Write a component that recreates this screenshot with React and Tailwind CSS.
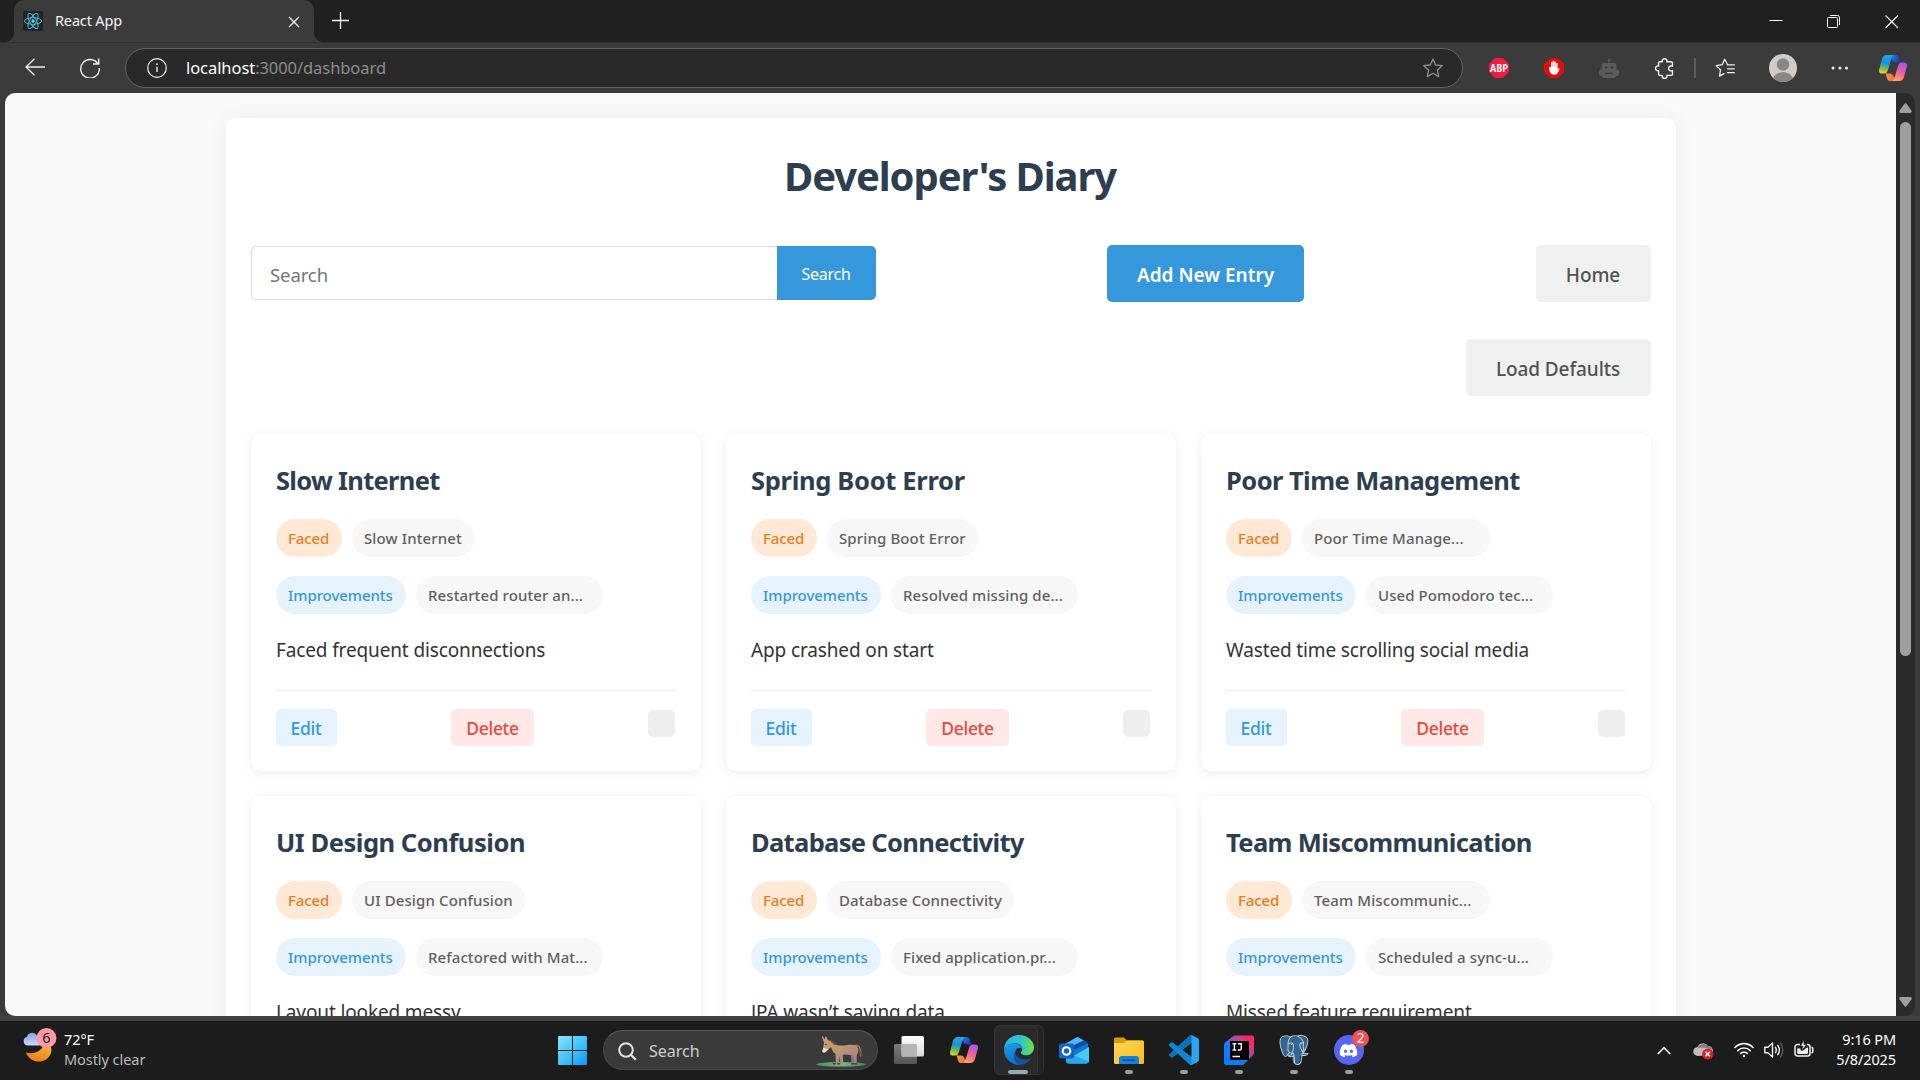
import React from 'react';
import { FaDiscord } from 'react-icons/fa';
import { SiPostgresql } from 'react-icons/si';

const ENTRIES = [
  { title: 'Slow Internet', titleTrack: 'tracking-[-0.027em]', faced: 'Slow Internet', improvement: 'Restarted router an...', text: 'Faced frequent disconnections', facedW: 'w-[122px]' },
  { title: 'Spring Boot Error', titleTrack: 'tracking-[-0.012em]', faced: 'Spring Boot Error', improvement: 'Resolved missing de...', text: 'App crashed on start', facedW: 'w-[151px]' },
  { title: 'Poor Time Management', titleTrack: 'tracking-[-0.022em]', faced: 'Poor Time Manage...', improvement: 'Used Pomodoro tec...', text: 'Wasted time scrolling social media', facedW: 'w-[188px]' },
  { title: 'UI Design Confusion', titleTrack: 'tracking-[-0.018em]', faced: 'UI Design Confusion', improvement: 'Refactored with Mat...', text: 'Layout looked messy', facedW: 'w-[173px]' },
  { title: 'Database Connectivity', titleTrack: 'tracking-[-0.026em]', faced: 'Database Connectivity', improvement: 'Fixed application.pr...', text: 'JPA wasn’t saving data', facedW: 'w-[187px]' },
  { title: 'Team Miscommunication', titleTrack: 'tracking-[-0.024em]', faced: 'Team Miscommunic...', improvement: 'Scheduled a sync-u...', text: 'Missed feature requirement', facedW: 'w-[188px]' },
];

function ReactLogo() {
  return (
    <svg viewBox="0 0 20 20" className="size-5 shrink-0">
      <rect width="20" height="20" rx="2" fill="#20232a" />
      <g fill="none" stroke="#58c4dc" strokeWidth="0.9">
        <ellipse cx="10" cy="10" rx="8.6" ry="3.3" />
        <ellipse cx="10" cy="10" rx="8.6" ry="3.3" transform="rotate(60 10 10)" />
        <ellipse cx="10" cy="10" rx="8.6" ry="3.3" transform="rotate(120 10 10)" />
      </g>
      <circle cx="10" cy="10" r="1.7" fill="#61dafb" />
    </svg>
  );
}

function Copilot({ id, className }) {
  return (
    <svg viewBox="0 0 28 26" className={className}>
      <defs>
        <linearGradient id={id + 'a'} x1="0.4" y1="0" x2="0.2" y2="1">
          <stop offset="0" stopColor="#1aa7f2" />
          <stop offset="0.4" stopColor="#1e8fd8" />
          <stop offset="0.65" stopColor="#58b56a" />
          <stop offset="1" stopColor="#f7d417" />
        </linearGradient>
        <linearGradient id={id + 'b'} x1="0.7" y1="0" x2="0.3" y2="1">
          <stop offset="0" stopColor="#a557ee" />
          <stop offset="0.5" stopColor="#ee5f9d" />
          <stop offset="1" stopColor="#ffa654" />
        </linearGradient>
        <linearGradient id={id + 'c'} x1="0" y1="0" x2="1" y2="0.4">
          <stop offset="0" stopColor="#1aa0f0" />
          <stop offset="1" stopColor="#1b3fc4" />
        </linearGradient>
        <linearGradient id={id + 'd'} x1="0" y1="0" x2="1" y2="0">
          <stop offset="0" stopColor="#f2a03c" />
          <stop offset="1" stopColor="#ea4a3c" />
        </linearGradient>
      </defs>
      <path d="M8 0h8.6c1.9 0 2.8 1 3.3 2.6L21.3 7.4h-4.5c-1.8 0-3-1.600-3.600-3.200z" fill={'url(#' + id + 'c)'} />
      <path d="M20 26h-8.6c-1.9 0-2.8-1-3.3-2.6L6.7 18.6h4.5c1.8 0 3 1.6 3.6 3.2z" fill={'url(#' + id + 'd)'} />
      <path d="M7.6 0h7.6c-1.6.4-2.3 1.8-2.8 3.4L8.9 15.2c-.6 2-1.7 3.4-3.9 3.4H3c-2.4 0-3.6-1.8-2.8-4.4L3 4C3.8 1.4 5.2 0 7.6 0z" fill={'url(#' + id + 'a)'} />
      <path d="M20.4 26h-7.6c1.6-.4 2.3-1.8 2.8-3.4l3.5-11.8c.6-2 1.7-3.4 3.9-3.4h2c2.4 0 3.6 1.8 2.8 4.4L25 22c-.8 2.6-2.2 4-4.6 4z" fill={'url(#' + id + 'b)'} />
    </svg>
  );
}

function TabStrip() {
  return (
    <div className="flex h-[42px] bg-[#202020]">
      <div className="flex w-[14px] bg-[#3b3b3b]">
        <div className="flex-1 rounded-br-[9px] bg-[#202020]" />
      </div>
      <div className="flex w-[300px] items-start rounded-t-[10px] bg-[#3b3b3b] pl-[9px] pr-[14px] pt-[11px]">
        <ReactLogo />
        <span className="ml-3 flex-1 text-[14.5px] leading-[18px] tracking-[-0.011em] text-[#f4f4f4]">React App</span>
        <svg viewBox="0 0 12 12" className="mt-[5px] size-3" stroke="#eee" strokeWidth="1.4" fill="none">
          <path d="M1 1l10 10M11 1L1 11" />
        </svg>
      </div>
      <div className="flex bg-[#3b3b3b]">
        <div className="w-[18px] rounded-bl-[9px] bg-[#202020]" />
      </div>
      <svg viewBox="0 0 18 18" className="mt-3 h-[18px] w-[18px]" stroke="#eee" strokeWidth="1.3" fill="none">
        <path d="M8.5 0v17M0 8.5h17" />
      </svg>
      <div className="ml-auto flex pr-[5px] pt-[15px]">
        <svg viewBox="0 0 14 14" className="mr-11 size-[14px]" stroke="#fff" strokeWidth="1"><path d="M.5 5.5h13" /></svg>
        <svg viewBox="0 0 14 14" className="mr-11 size-[14px]" stroke="#fff" strokeWidth="1" fill="none">
          <rect x=".5" y="2.5" width="10" height="10" rx="1" />
          <path d="M3 .5h7.500a2 2 0 0 1 2 2V10" />
        </svg>
        <svg viewBox="0 0 14 14" className="mr-4 size-[14px]" stroke="#fff" strokeWidth="1.1"><path d="M.5 .5l12.500 12.500M13 .5L.5 13" /></svg>
      </div>
    </div>
  );
}

function ExtensionIcons() {
  return (
    <div className="flex h-7 items-center">
      <svg viewBox="0 0 20 20" className="ml-[26px] size-5">
        <path d="M6 0h8l6 6v8l-6 6H6l-6-6V6z" fill="#ee1c40" />
        <text x="10" y="13.6" textAnchor="middle" fontSize="10" fontWeight="700" fill="#fff" textLength="18" lengthAdjust="spacingAndGlyphs" fontFamily="Open Sans, sans-serif">ABP</text>
      </svg>
      <svg viewBox="0 0 20 20" className="ml-[35px] size-5">
        <path d="M6 0h8l6 6v8l-6 6H6l-6-6V6z" fill="#e40d0d" />
        <path d="M5 9.500c0-1 1.500-1.100 1.700-.1L7 10V4.600c0-1 1.400-1 1.400 0V8.500h.3V3.300c0-1 1.500-1 1.500 0V8.500h.3V3.900c0-1 1.400-1 1.400 0V8.800h.3V5.400c0-1 1.400-1 1.400 0V11.500l.6-.9c.5-.8 1.500-.3 1.200.6-.9 2.500-1.800 5.500-5.300 5.500C7 16.700 5.500 14.500 5 9.500z" fill="#fff" />
      </svg>
      <svg viewBox="0 0 20 20" className="ml-[35px] size-5" fill="#5b5b5b">
        <circle cx="10" cy="2" r="1.500" /><path d="M9.500 3h1v3h-1z" />
        <rect x="2.500" y="5" width="15" height="8" rx="2.500" />
        <rect x="0" y="11.500" width="20" height="6.500" rx="2" />
        <rect x="3" y="10" width="14" height="10" rx="2" />
        <g fill="#3b3b3b"><circle cx="7" cy="9.500" r="1.300" /><circle cx="13" cy="9.500" r="1.300" /><rect x="6" y="14.500" width="8" height="1.500" rx=".7" /></g>
      </svg>
      <svg viewBox="0 0 20 21" className="ml-[36px] h-[21px] w-5" fill="none" stroke="#f0f0f0" strokeWidth="1.400" strokeLinejoin="round">
        <path d="M4.800 3.800h2.500a2.400 2.400 0 1 1 4.600 0h4.300a1.200 1.200 0 0 1 1.200 1.200v3.200c-1.500-.6-3.800 0-3.800 2.200s2.300 2.900 3.800 2.200v3.600a1.200 1.200 0 0 1-1.200 1.200h-4.300a2.400 2.400 0 1 1-4.600 0H4.800A1.200 1.200 0 0 1 3.600 16.200v-3.600a2.400 2.400 0 1 1 0-4.600V5a1.200 1.200 0 0 1 1.200-1.200z" />
      </svg>
      <div className="ml-[19px] h-5 w-[2px] bg-[#5c5c5c]" />
      <svg viewBox="0 0 20 20" className="ml-[19px] size-5" fill="none" stroke="#f0f0f0" strokeWidth="1.300" strokeLinejoin="round" strokeLinecap="round">
        <path d="M12.500 6.500L9.700 1.200 7.200 6.700l-6 .9 4.300 4.300-1 6.200 4.500-2.500M12.500 6.900h6.800M12.500 10.800h6.800M12.500 14.700h6.800" />
      </svg>
      <svg viewBox="0 0 28 28" className="ml-[34px] size-7">
        <circle cx="14" cy="14" r="14" fill="#cfccc9" />
        <circle cx="14" cy="10.500" r="6.200" fill="#8a8683" />
        <path d="M4.300 24a14 14 0 0 0 19.400 0c-1-3.600-5-5.800-9.700-5.800S5.300 20.400 4.300 24z" fill="#8a8683" />
      </svg>
      <svg viewBox="0 0 18 4" className="ml-[34px] h-1 w-[18px]" fill="#f0f0f0"><circle cx="2" cy="2" r="1.500" /><circle cx="9" cy="2" r="1.500" /><circle cx="15.500" cy="2" r="1.500" /></svg>
      <Copilot id="tb" className="ml-[30px] h-[26px] w-7" />
    </div>
  );
}

function AddressRow() {
  return (
    <div className="flex h-[51px] items-start border-t border-[#333] bg-[#3b3b3b] pt-[5px]">
      <svg viewBox="0 0 20 18" className="ml-[25px] mt-[10px] h-[18px] w-5" fill="none" stroke="#f0f0f0" strokeWidth="1.300"><path d="M20 9H1M9.500.7L1 9l8.500 8.300" /></svg>
      <svg viewBox="0 0 20 20" className="ml-[35px] mt-[10px] size-5" fill="none" stroke="#f0f0f0" strokeWidth="1.400"><path d="M18 6A9.300 9.300 0 1 0 19.300 10M18.700.5V6H13" /></svg>
      <div className="ml-[25px] flex h-10 w-[1338px] items-center rounded-full border border-[#636363] bg-[#292929]">
        <svg viewBox="0 0 20 20" className="ml-[21px] size-5" fill="none" stroke="#f0f0f0" strokeWidth="1.200"><circle cx="10" cy="10" r="9.300" /><path d="M10 8.800V14" strokeWidth="1.400" /><circle cx="10" cy="6.200" r=".9" fill="#f0f0f0" stroke="none" /></svg>
        <span className="ml-[19px] flex-1 pb-px text-[16.5px] leading-6 tracking-[-0.004em] text-[#8d8d8d]"><span className="text-white">localhost</span>:3000/dashboard</span>
        <svg viewBox="0 0 20 20" className="mr-[19px] size-5" fill="none" stroke="#8f8f8f" strokeWidth="1.300" strokeLinejoin="round"><path d="M10 1l2.700 6 6.500.7-4.800 4.400 1.300 6.500L10 15.300l-5.700 3.300 1.300-6.500L.8 7.700l6.500-.7z" /></svg>
      </div>
      <div className="mt-[6px]"><ExtensionIcons /></div>
    </div>
  );
}

function EntryCard({ entry }) {
  const pill = 'h-[38px] rounded-full pl-3 text-[15px] font-medium leading-[38px] whitespace-nowrap';
  return (
    <div className="h-[337px] rounded-[10px] bg-white p-[25px] shadow-[0_2px_12px_rgba(0,0,0,0.08)]">
      <h2 className={'mb-[18px] text-[25.5px] font-bold leading-[42px] text-[#2c3e50] whitespace-nowrap ' + entry.titleTrack}>{entry.title}</h2>
      <div className="mb-[19px] flex gap-[10px]">
        <span className={pill + ' w-[66px] bg-[#ffe8d6] text-[#e67e22] tracking-[-0.006em]'}>Faced</span>
        <span className={pill + ' bg-[#f7f7f7] tracking-[0.008em] text-[#5f5f5f] ' + entry.facedW}>{entry.faced}</span>
      </div>
      <div className="flex gap-[10px]">
        <span className={pill + ' w-[130px] bg-[#e6f3ff] text-[#3498db] tracking-[-0.004em]'}>Improvements</span>
        <span className={pill + ' w-[187px] bg-[#f7f7f7] tracking-[0.006em] text-[#5f5f5f]'}>{entry.improvement}</span>
      </div>
      <p className="mt-[21px] text-[19px] leading-[30px] tracking-[-0.007em] text-[#333] whitespace-nowrap">{entry.text}</p>
      <div className="mt-[25px] flex items-start justify-between border-t border-[#eee] pt-[18px]">
        <button className="h-[37px] w-[61px] rounded-[5px] bg-[#e6f3ff] pr-px pt-px text-[17.5px] font-medium tracking-[-0.015em] text-[#3498db]">Edit</button>
        <button className="h-[37px] w-[83px] rounded-[5px] bg-[#ffe8e6] pt-px text-[17.5px] font-medium tracking-[-0.018em] text-[#e74c3c]">Delete</button>
        <span className="mr-px mt-px size-[27px] rounded-[5px] bg-[#eee]" />
      </div>
    </div>
  );
}

function Dashboard() {
  return (
    <div className="flex h-[923px] bg-[#3b3b3b] pl-[5px] pr-[5px]">
      <main className="w-[1891px] overflow-hidden rounded-bl-[10px] rounded-tl-[10px] bg-[#f9f9f9] pt-[25px] font-['Noto_Sans','Open_Sans',sans-serif]">
        <div className="ml-[221px] h-[1400px] w-[1450px] rounded-[10px] bg-white px-[25px] pt-8 shadow-[0_0_25px_rgba(0,0,0,0.05)]">
          <h1 className="pr-[2px] text-center text-[40px] font-bold leading-[52px] tracking-[-0.027em] text-[#2c3e50]">Developer's Diary</h1>
          <div className="mt-[43px] flex items-center justify-between">
            <div className="-mt-px flex h-[54px] w-[625px]">
              <div className="flex-1 rounded-l-[5px] border border-r-0 border-[#ddd] pl-[18px] pt-[2px] text-[18.5px] leading-[51px] tracking-[-0.005em] text-[#757575]">Search</div>
              <button className="w-[99px] rounded-r-[5px] bg-[#3498db] pr-px pt-px text-[16px] tracking-[-0.017em] text-white">Search</button>
            </div>
            <button className="mr-px h-[57px] w-[197px] rounded-[5px] bg-[#3498db] pt-1 text-[19px] font-semibold text-white">Add New Entry</button>
            <button className="h-[57px] w-[115px] rounded-[5px] bg-[#f0f0f0] pt-1 pr-px text-[19px] font-medium tracking-[-0.005em] text-[#505050]">Home</button>
          </div>
          <div className="mt-[37px] flex justify-end">
            <button className="h-[57px] w-[185px] rounded-[5px] bg-[#f0f0f0] pt-1 pr-px text-[19px] font-medium tracking-[-0.005em] text-[#505050]">Load Defaults</button>
          </div>
          <div className="mt-[38px] grid grid-cols-3 gap-[25px]">
            {ENTRIES.map((e) => <EntryCard key={e.title} entry={e} />)}
          </div>
        </div>
      </main>
      <div className="flex w-[19px] flex-col items-center rounded-r-[10px] bg-[#2b2b2b] pt-[10px]">
        <svg viewBox="0 0 13 10" className="h-[10px] w-[13px]" fill="#9f9f9f"><path d="M5.300 1Q6.500-.6 7.700 1l4.800 6.700q.9 2-1.200 2.200H1.700Q-.4 9.700.5 7.700z" /></svg>
        <div className="mt-[9px] h-[534px] w-[11px] rounded-full bg-[#9f9f9f]" />
        <svg viewBox="0 0 13 10" className="mb-[9px] mt-auto h-[10px] w-[13px]" fill="#9f9f9f"><path d="M5.300 9q1.200 1.600 2.400 0l4.800-6.700Q13.400.3 11.300.1H1.700Q-.4.3.5 2.300z" /></svg>
      </div>
    </div>
  );
}

function Weather() {
  return (
    <svg viewBox="0 0 36 36" className="h-9 w-9">
      <defs>
        <linearGradient id="moon" x1="0.800" y1="0" x2="0.400" y2="1"><stop offset="0" stopColor="#f9c23c" /><stop offset="1" stopColor="#ee7b17" /></linearGradient>
        <linearGradient id="cloud" x1="0" y1="0" x2="0" y2="1"><stop offset="0" stopColor="#7fa3e0" /><stop offset="1" stopColor="#c9dcfa" /></linearGradient>
      </defs>
      <path d="M22.500 14c5 3 7.200 7.500 5.300 12.500-2 5.500-7.500 8.500-13.300 8-5.500-.5-10-4.300-11.500-9 8 2.500 17-1.500 19.500-11.500z" fill="url(#moon)" />
      <path d="M4.500 18.500A4.500 4.500 0 0 1 4 9.700 5.500 5.500 0 0 1 14 8.500 5 5 0 0 1 16 18.500z" fill="url(#cloud)" />
      <circle cx="23.500" cy="11" r="10" fill="#ff99a4" />
      <text x="23.500" y="16.200" textAnchor="middle" fontSize="14.500" fill="#222" fontFamily="Noto Sans, sans-serif">6</text>
    </svg>
  );
}

function Donkey() {
  return (
    <svg viewBox="0 0 50 32" className="h-8 w-[50px]">
      <defs>
        <linearGradient id="dk" x1="0" y1="0" x2="1" y2="1"><stop offset="0" stopColor="#cda066" /><stop offset="0.500" stopColor="#bd9570" /><stop offset="1" stopColor="#9b8190" /></linearGradient>
        <linearGradient id="grass" x1="0" y1="0" x2="1" y2="0"><stop offset="0" stopColor="#3f8f53" /><stop offset="0.500" stopColor="#7db884" /><stop offset="1" stopColor="#2f8a5a" /></linearGradient>
      </defs>
      <ellipse cx="25" cy="29.300" rx="25" ry="2.300" fill="url(#grass)" />
      <path d="M39 10q5.300 0 5.300 5.500l.2 6" stroke="#b98d5e" strokeWidth="1.200" fill="none" />
      <path d="M43.300 15.500l1.800 7 .8-6z" fill="#7a5a4a" />
      <path d="M6 0.500l2.500 4L9.800 1l1.800 4c2.500.3 5 2 7 4l3.400 1.300c6 .8 11-1.300 16.500-.3 3.700.8 4.500 4 3.500 7.500l-1.200 3-.2 8.500h-3l-.5-8.500-6.800-1-3.600.3.600 9.200h-2.800l-1-8-.5 8h-3l-.6-10.300c-2.500-1-3-3.700-4.400-6.700l-3 3-3.500 2.500c-2 .2-2.400-1.800-1.600-3.500L8 8z" fill="url(#dk)" />
      <path d="M34.800 20l2.600.5.600 9h-2.500z" fill="#8d7488" />
      <path d="M11.500 4.500c4 0 7.500 2.500 10.500 6l-4-.8c-2-2.200-4-4-6.500-5.200z" fill="#6f4d42" />
      <path d="M7.300 12.800l5 1.400-3.200 3.200c-2 .8-3.300-.8-2.600-2.500z" fill="#e6e0e0" />
      <circle cx="10" cy="9.500" r=".8" fill="#333" />
      <path d="M6.300 1.500l1.800 3.800M9.900 2.200l1 2.800" stroke="#e89a94" strokeWidth="1" />
      <path d="M16.800 28h3v1.600h-3zM21.200 28h3v1.600h-3zM35.200 28h2.800v1.600h-2.800zM38.300 28h2.800v1.600h-2.800z" fill="#4e3b4c" />
    </svg>
  );
}

function Slot({ children, dot }) {
  return (
    <div className="flex h-[59px] w-[55px] flex-col items-center pt-[14px]">
      <div className="flex h-[30px] items-center justify-center">{children}</div>
      {dot && <div className="mt-[5px] h-1 w-2 rounded-full bg-[#9d9d9d]" />}
    </div>
  );
}

function TaskbarApps() {
  return (
    <>
      <svg viewBox="0 0 29 29" className="mt-[15px] size-[29px]">
        <defs><linearGradient id="win" x1="0" y1="0" x2="29" y2="29" gradientUnits="userSpaceOnUse"><stop offset="0" stopColor="#8be2ff" /><stop offset="0.500" stopColor="#45c4fb" /><stop offset="1" stopColor="#0a95fb" /></linearGradient></defs>
        <path d="M1 0h13v14H0V1a1 1 0 0 1 1-1zM15 0h13a1 1 0 0 1 1 1v13H15zM0 15h14v14H1a1 1 0 0 1-1-1zM15 15h14v13a1 1 0 0 1-1 1H15z" fill="url(#win)" />
      </svg>
      <div className="ml-4 mt-[9px] flex h-10 w-[275px] items-center rounded-full border border-[#4a4a4a] border-t-[#5c5c5c] bg-[#3a3a3a]">
        <svg viewBox="0 0 19 19" className="ml-[14px] mt-[2px] size-[19px]" fill="none" stroke="#e2e2e2" strokeWidth="2"><circle cx="8" cy="8" r="6.800" /><path d="M12.800 12.800l5 5" strokeWidth="2.300" /></svg>
        <span className="ml-[12px] flex-1 pt-px text-[16px] leading-6 text-[#d0d0d0]">Search</span>
        <div className="mr-[11px] mt-px"><Donkey /></div>
      </div>
      <div className="ml-[3px] flex">
        <Slot>
          <svg viewBox="0 0 30 28" className="h-7 w-[30px]">
            <defs><linearGradient id="tv" x1="0" y1="0" x2="0" y2="1"><stop offset="0" stopColor="#fff" /><stop offset="1" stopColor="#d6d6d6" /></linearGradient><linearGradient id="tv2" x1="0" y1="0" x2="0" y2="1"><stop offset="0" stopColor="#7c7c7c" /><stop offset="1" stopColor="#555" /></linearGradient></defs>
            <rect x="0" y="8" width="23" height="20" rx="1.500" fill="url(#tv2)" />
            <rect x="7.500" y="0" width="22.500" height="20.500" rx="1.500" fill="url(#tv)" />
            <path d="M7.500 8H21.500a1.500 1.500 0 0 1 1.500 1.500V20.500H9a1.500 1.500 0 0 1-1.500-1.500z" fill="#b4b4b4" />
          </svg>
        </Slot>
        <Slot><Copilot id="tk" className="h-[26px] w-7" /></Slot>
        <div className="relative w-[55px]">
          <div className="absolute left-[10px] top-[4px] h-[50px] w-[43px] rounded-[6px] border border-[#333] bg-[#222]" />
          <div className="absolute left-[3px] top-[4px] h-[50px] w-11 rounded-[6px] border border-[#363636] bg-[#2a2a2a]" />
          <svg viewBox="0 0 30 30" className="absolute left-[13px] top-[14px] size-[30px]">
            <defs>
              <linearGradient id="ea" x1="0" y1="0.300" x2="1" y2="0.300"><stop offset="0" stopColor="#2bb0e4" /><stop offset="0.550" stopColor="#30c6d0" /><stop offset="1" stopColor="#6be03f" /></linearGradient>
              <linearGradient id="eb" x1="0.300" y1="0" x2="0.500" y2="1"><stop offset="0" stopColor="#1b9de2" /><stop offset="1" stopColor="#0f6fd0" /></linearGradient>
            </defs>
            <path d="M15 0c8.500 0 15 6 15 12.500 0 4.700-3.500 7.800-7.700 7.800-3.800 0-5.400-1.600-5.400-2.700 0-.9 1.400-1.400 1.400-3.700 0-3-3-5.600-7-5.600C6 8.300 2 11 0 15 0 6.500 6.700 0 15 0z" fill="url(#ea)" />
            <path d="M0 15C1.500 10 6.500 8 10.500 8.200c4.300.1 7.800 2.600 7.800 5.700-1.500-1.500-4-1.600-5.600 0-3.700 4-1.700 11.500 4 15.900A15 15 0 0 1 0 15z" fill="url(#eb)" />
            <path d="M11.500 15.500c-.6 5.500 4.500 9.300 10 9.100 2.500 0 4.800-.8 6.500-2C25 27.500 20.500 30 15.500 30 9.500 28 8.500 19.500 11.500 15.500z" fill="#1252a0" />
          </svg>
          <div className="absolute left-[17px] top-[49px] h-1 w-5 rounded-full bg-[#99a9b0]" />
        </div>
        <Slot>
          <svg viewBox="0 0 30 27" className="h-[27px] w-[30px]">
            <path d="M6 7L17.500 0.500Q18.500 0 19.500.5L29 6.500v8L18 22 6 14z" fill="#1477cf" />
            <path d="M17.500.5L6 7v5l19-8.500L19.500.5Q18.500 0 17.500.5z" fill="#4cb9f6" />
            <path d="M29.500 6L25 3.300 8 12v4z" fill="#0b4ea8" />
            <path d="M30 10v13.500a3 3 0 0 1-3 3H10a3 3 0 0 1-3-3z" fill="#42cdf6" />
            <path d="M7 15l23 9.500c-.4 1.200-1.500 2-3 2H10a3 3 0 0 1-3-3z" fill="#2aa6ee" />
            <rect x="0" y="6.500" width="15" height="15" rx="2" fill="#1266c4" />
            <circle cx="7.500" cy="14" r="3.800" fill="none" stroke="#fff" strokeWidth="2.100" />
          </svg>
        </Slot>
        <Slot dot>
          <svg viewBox="0 0 30 27" className="h-[27px] w-[30px]">
            <defs><linearGradient id="fo" x1="0" y1="0" x2="1" y2="1"><stop offset="0" stopColor="#ffd95e" /><stop offset="1" stopColor="#fbb916" /></linearGradient></defs>
            <path d="M0 2A1.500 1.500 0 0 1 1.500.5H10l3 3h15.500A1.500 1.500 0 0 1 30 5v8H0z" fill="#dd9a09" />
            <path d="M0 6h10l3.500-2.500h15A1.500 1.500 0 0 1 30 5v20.500a1.500 1.500 0 0 1-1.500 1.500h-27A1.500 1.500 0 0 1 0 25.500z" fill="url(#fo)" />
            <path d="M5 27v-5.500A2.500 2.500 0 0 1 7.500 19h15a2.500 2.500 0 0 1 2.500 2.500V27z" fill="#1681d8" />
            <rect x="8.500" y="22.500" width="13" height="1.200" rx=".6" fill="#0b4a86" />
          </svg>
        </Slot>
        <Slot dot>
          <svg viewBox="0 0 100 100" className="size-[30px]">
            <path d="M96.460 10.800L75.860.87a6.230 6.230 0 0 0-7.100 1.210L1.300 63.580a4.170 4.170 0 0 0 .004 6.170l5.500 5.010a4.170 4.170 0 0 0 5.320.236L93.360 13.370c2.730-2.070 6.640-.125 6.640 3.300v-.24a6.250 6.250 0 0 0-3.540-5.630z" fill="#0b73b8" />
            <path d="M96.460 89.200l-20.600 9.930a6.230 6.230 0 0 1-7.100-1.210L1.300 36.420a4.170 4.170 0 0 1 .004-6.170l5.500-5.010a4.170 4.170 0 0 1 5.320-.236l81.230 61.620c2.730 2.070 6.640.125 6.640-3.300v.24a6.250 6.250 0 0 1-3.540 5.630z" fill="#1085d2" />
            <path d="M75.860 99.130a6.230 6.230 0 0 1-7.100-1.210c2.310 2.300 6.250.67 6.250-2.590V4.670c0-3.260-3.940-4.890-6.250-2.590a6.230 6.230 0 0 1 7.100-1.210l20.600 9.910A6.250 6.250 0 0 1 100 16.410v67.170a6.250 6.250 0 0 1-3.540 5.630z" fill="#2aa5f3" />
          </svg>
        </Slot>
        <Slot dot>
          <svg viewBox="0 0 30 30" className="size-[30px]">
            <defs><linearGradient id="ij" x1="1" y1="0" x2="0.100" y2="0.900"><stop offset="0.120" stopColor="#fe2857" /><stop offset="0.400" stopColor="#b04a9a" /><stop offset="0.560" stopColor="#6a5fd8" /><stop offset="0.700" stopColor="#0b7bff" /></linearGradient></defs>
            <path d="M11 .5h17a2 2 0 0 1 2 2v15.500a3 3 0 0 1-.9 2.100l-9 9a3 3 0 0 1-2.100.9H2a2 2 0 0 1-2-2V9.500a3 3 0 0 1 1.400-2.300l8-6.200A3 3 0 0 1 11 .5z" fill="url(#ij)" />
            <rect x="6" y="6" width="19" height="19" fill="#000" />
            <path d="M8.500 8.700h3.800M8.500 15h3.800M10.400 8.700V15M14 8.700h3.300v4.500q0 1.800-1.600 1.800h-1.900M8.500 21.500h7.500" stroke="#fff" strokeWidth="1.400" fill="none" />
          </svg>
        </Slot>
        <Slot dot>
          <div className="relative size-[30px]">
            <svg viewBox="0 0 30 30" className="absolute inset-0 size-[30px]">
              <path d="M6 1.500c3-1 5 0 6.500.7 2-1 4-1 6-.3 3-1.200 7-.8 9 2 2 3-.3 9.500-3 13.500l3.500 1.300c0 1.800-4 3-6.500 2.300-.5 4 0 8-4.500 8.500-3.500 0-3.500-4-3.700-8.500-2 1-4.500.5-5.800-.8C4 21 .8 12 1 7c.3-3.500 2.500-5 5-5.500z" fill="#336791" />
            </svg>
            <SiPostgresql className="absolute inset-0 size-[30px] text-[#c6d6e2]" />
          </div>
        </Slot>
        <div className="relative">
          <Slot dot><div className="flex size-[30px] items-center justify-center rounded-full bg-[#5865f2]"><FaDiscord className="size-[19px] text-white" /></div></Slot>
          <div className="absolute left-[31px] top-[9px] flex size-[17px] items-center justify-center rounded-full bg-[#ed5257] text-[13.5px] leading-none text-white">2</div>
        </div>
      </div>
    </>
  );
}

function Tray() {
  return (
    <>
      <svg viewBox="0 0 14 9" className="mt-[25px] h-[9px] w-[14px]" fill="none" stroke="#f3f3f3" strokeWidth="1.700"><path d="M.8 8L7 1.600 13.200 8" /></svg>
      <svg viewBox="0 0 21 18" className="ml-[22px] mt-[21px] h-[18px] w-[21px]">
        <path d="M5 14A4.500 4.500 0 0 1 4.500 5 6 6 0 0 1 15 4a5 5 0 0 1 3 9z" fill="#bdbdbd" />
        <path d="M5 6a6 6 0 0 1 10-2 5 5 0 0 1 4 4c-5-3-9-3-14-2z" fill="#7e7e7e" />
        <circle cx="14.700" cy="12" r="5.600" fill="#dc2127" />
        <path d="M12.500 9.800l4.400 4.400M16.900 9.800l-4.400 4.400" stroke="#fff" strokeWidth="1.400" />
      </svg>
      <svg viewBox="0 0 20 16" className="ml-5 mt-[21px] h-4 w-5" fill="none" stroke="#f3f3f3" strokeWidth="1.600" strokeLinecap="round"><path d="M1 5.500a12.500 12.500 0 0 1 18 0M3.800 8.600a8.600 8.600 0 0 1 12.400 0M6.600 11.500a4.800 4.800 0 0 1 6.800 0" /><circle cx="10" cy="14" r="1.200" fill="#f3f3f3" stroke="none" /></svg>
      <svg viewBox="0 0 20 18" className="ml-[10px] mt-[20px] h-[18px] w-5" fill="none" stroke="#f3f3f3" strokeWidth="1.400" strokeLinejoin="round" strokeLinecap="round"><path d="M.8 6.300h3L8.500 2v14l-4.700-4.300h-3zM11.500 6.300q1.600 2.700 0 5.400M13.800 4.300q3.200 4.700 0 9.400" /><path d="M16.500 2q4.500 7 0 14" stroke="#5a5a5a" /></svg>
      <svg viewBox="0 0 20 18" className="ml-[10px] mt-[19px] h-[18px] w-5" fill="none" stroke="#f3f3f3" strokeWidth="1.500"><path d="M6 4.500H3.500A2.500 2.500 0 0 0 1 7v6.500A2.500 2.500 0 0 0 3.500 16h10a2.500 2.500 0 0 0 2.500-2.500V7a2.500 2.500 0 0 0-2.500-2.500H13M17.500 7.300q1.300.3 1.300 1.500v2.800q0 1.200-1.300 1.500" /><path d="M3.200 8.500h3.300v2h2.500l4-3h1v5a1.500 1.500 0 0 1-1.500 1.500h-7.800a1.500 1.500 0 0 1-1.500-1.500z" fill="#f3f3f3" stroke="none" /><path d="M10 0L6.500 6h2.300L8 10.500 12.500 4.500H10z" fill="#f3f3f3" stroke="#1c1c1c" strokeWidth=".6" /></svg>
      <div className="ml-[10px] mr-6 w-[72px] pt-2 text-right text-[14.5px] leading-5 tracking-[-0.007em] text-white"><div>9:16 PM</div><div>5/8/2025</div></div>
    </>
  );
}

function Taskbar() {
  return (
    <div className="flex h-[59px] bg-[#1c1c1c]">
      <div className="flex w-[558px]">
        <div className="ml-[23px] mt-[6px]"><Weather /></div>
        <div className="ml-[5px] pt-2 text-[14.5px] leading-5 tracking-[-0.004em] text-white"><div>72°F</div><div className="text-[#bdbdbd]">Mostly clear</div></div>
      </div>
      <TaskbarApps />
      <div className="ml-auto flex"><Tray /></div>
    </div>
  );
}

export default function App() {
  return (
    <div className="flex h-[1080px] w-[1920px] flex-col overflow-hidden bg-[#3b3b3b] font-['Noto_Sans','Open_Sans',sans-serif]">
      <TabStrip />
      <AddressRow />
      <Dashboard />
      <div className="h-[5px] bg-[#404040]" />
      <Taskbar />
    </div>
  );
}
